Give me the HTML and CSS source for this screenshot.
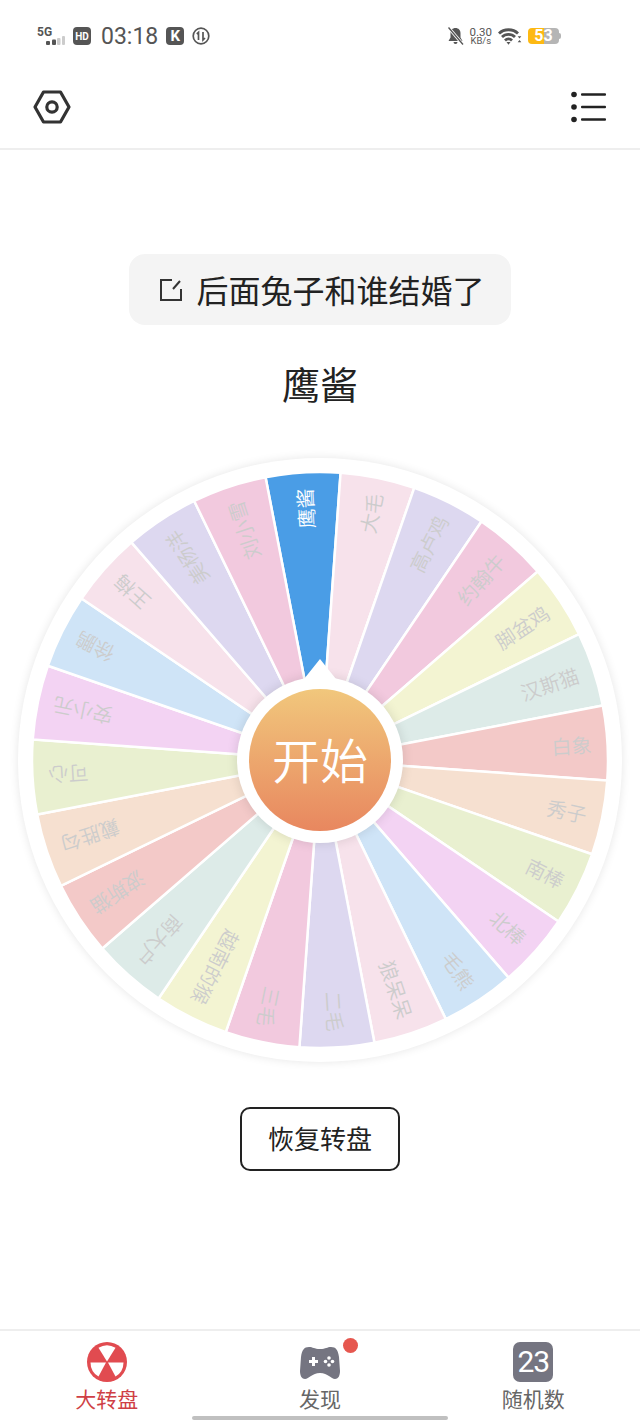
FILE: index.html
```html
<!DOCTYPE html>
<html>
  <head>
    <meta charset="utf-8">
    <meta name="viewport" content="width=device-width, initial-scale=1.0">
    <link rel="stylesheet" href="styles.css">
    <title>大转盘</title>
  </head>
  <body>
    <!--Status bar-->
    <div class="status-bar">
      <div class="status-left">
        <div class="signal">
          <span class="signal-text">5G</span>
          <svg width="21" height="10" viewBox="0 0 21 10">
            <rect x="2" y="6" width="4" height="4" rx="1" fill="#555"/>
            <rect x="8" y="4.5" width="4" height="5.5" rx="1" fill="#555"/>
            <rect x="13" y="3" width="3.5" height="7" rx="1" fill="#ccc"/>
            <rect x="18" y="1" width="3" height="9" rx="1" fill="#ccc"/>
          </svg>
        </div>
        <span class="badge badge-hd">HD</span>
        <span class="clock">03:18</span>
        <span class="badge badge-k">K</span>
        <svg width="18" height="18" viewBox="0 0 18 18" fill="none" stroke="#555">
          <circle cx="9" cy="9" r="7.8" stroke-width="1.7"/>
          <path d="M6.5 13V5.5L4.8 7M11 5v8l2-2" stroke-width="1.7"/>
        </svg>
      </div>
      <div class="status-right">
        <svg width="17" height="18" viewBox="0 0 17 18">
          <path d="M8.500 1c-3 0-5 2.200-5 5.200v4.300L1.500 14h14l-2-3.500V6.200c0-3-2-5.200-5-5.200zM6.500 15a2 2 0 0 0 4 0z" fill="#555"/>
          <path d="M1.500 .5L15.500 17" stroke="#fff" stroke-width="3"/>
          <path d="M1.500 .5L16 17.500" stroke="#555" stroke-width="1.300"/>
        </svg>
        <div class="speed"><span>0.30</span><span class="speed-unit">KB/s</span></div>
        <svg width="24" height="18" viewBox="0 0 24 18" fill="none" stroke="#555" stroke-width="2.800">
          <path d="M1 6.500C6 1.500 15 1.500 20 6.500M4 10C7.500 6.500 13.500 6.500 17 10M7 13.500c2-2 5-2 7 0"/>
          <path d="M8.500 15l2 2.800 2-2.800z" fill="#555" stroke="none"/>
          <path d="M21 11.500l1.800-2.200h-3.600zM21 13l1.800 2.200h-3.600z" fill="#555" stroke="none" transform="translate(.5 0)"/>
        </svg>
        <div class="battery"><span>5</span><span>3</span></div>
      </div>
    </div>

    <!--Toolbar-->
    <div class="toolbar">
      <svg width="38" height="34" viewBox="0 0 38 34" fill="none" stroke="#333" stroke-width="3.200">
        <path d="M10.500 2h17l8.500 15-8.500 15h-17L2 17z" stroke-linejoin="round"/>
        <circle cx="19" cy="17" r="5.200"/>
      </svg>
      <svg width="35" height="32" viewBox="0 0 35 32" fill="#222">
        <circle cx="3" cy="3.500" r="2.800"/>
        <circle cx="3" cy="16" r="2.800"/>
        <circle cx="3" cy="28.500" r="2.800"/>
        <rect x="10" y="2.300" width="25" height="2.500" rx="1"/>
        <rect x="10" y="14.800" width="25" height="2.500" rx="1"/>
        <rect x="10" y="27.300" width="25" height="2.500" rx="1"/>
      </svg>
    </div>

    <div class="content">
      <div class="question">
        <svg width="24" height="24" viewBox="0 0 24 24" fill="none" stroke="#333" stroke-width="2">
          <path d="M13 2H2v20h20V11M14 11l7-8"/>
        </svg>
        <span class="question-text">后面兔子和谁结婚了</span>
      </div>
      <div class="winner">鹰酱</div>

      <!--Wheel-->
      <div class="wheel">
        <svg class="wheel-svg" width="604" height="604" viewBox="-302 -302 604 604">
          <defs>
            <path id="wedge" d="M0 0L-37.590 -285.530A288 288 0 0 1 37.590 -285.530Z"/>
          </defs>
          <g class="slices">
            <g transform="rotate(-3.400)"><use href="#wedge" class="c-blue"/><text class="label label-on" transform="rotate(-90)" x="272">鹰酱</text></g>
            <g transform="rotate(11.600)"><use href="#wedge" class="c-lpink"/><text class="label" transform="rotate(-90)" x="272">大毛</text></g>
            <g transform="rotate(26.600)"><use href="#wedge" class="c-lav"/><text class="label" transform="rotate(-90)" x="272">高卢鸡</text></g>
            <g transform="rotate(41.600)"><use href="#wedge" class="c-pink"/><text class="label" transform="rotate(-90)" x="272">约翰牛</text></g>
            <g transform="rotate(56.600)"><use href="#wedge" class="c-yellow"/><text class="label" transform="rotate(-90)" x="272">脚盆鸡</text></g>
            <g transform="rotate(71.600)"><use href="#wedge" class="c-teal"/><text class="label" transform="rotate(-90)" x="272">汉斯猫</text></g>
            <g transform="rotate(86.600)"><use href="#wedge" class="c-red"/><text class="label" transform="rotate(-90)" x="272">白象</text></g>
            <g transform="rotate(101.600)"><use href="#wedge" class="c-peach"/><text class="label" transform="rotate(-90)" x="272">秀子</text></g>
            <g transform="rotate(116.600)"><use href="#wedge" class="c-green"/><text class="label" transform="rotate(-90)" x="272">南棒</text></g>
            <g transform="rotate(131.600)"><use href="#wedge" class="c-purple"/><text class="label" transform="rotate(-90)" x="272">北棒</text></g>
            <g transform="rotate(146.600)"><use href="#wedge" class="c-lblue"/><text class="label" transform="rotate(-90)" x="272">毛熊</text></g>
            <g transform="rotate(161.600)"><use href="#wedge" class="c-lpink"/><text class="label" transform="rotate(-90)" x="272">狼呆呆</text></g>
            <g transform="rotate(176.600)"><use href="#wedge" class="c-lav"/><text class="label" transform="rotate(-90)" x="272">二毛</text></g>
            <g transform="rotate(191.600)"><use href="#wedge" class="c-pink"/><text class="label" transform="rotate(-90)" x="272">三毛</text></g>
            <g transform="rotate(206.600)"><use href="#wedge" class="c-yellow"/><text class="label" transform="rotate(-90)" x="272">越南的猴</text></g>
            <g transform="rotate(221.600)"><use href="#wedge" class="c-teal"/><text class="label" transform="rotate(-90)" x="272">商大户</text></g>
            <g transform="rotate(236.600)"><use href="#wedge" class="c-red"/><text class="label" transform="rotate(-90)" x="272">波斯猫</text></g>
            <g transform="rotate(251.600)"><use href="#wedge" class="c-peach"/><text class="label" transform="rotate(-90)" x="272">戴胜勾</text></g>
            <g transform="rotate(266.600)"><use href="#wedge" class="c-green"/><text class="label" transform="rotate(-90)" x="272">可心</text></g>
            <g transform="rotate(281.600)"><use href="#wedge" class="c-purple"/><text class="label" transform="rotate(-90)" x="272">安小元</text></g>
            <g transform="rotate(296.600)"><use href="#wedge" class="c-lblue"/><text class="label" transform="rotate(-90)" x="272">徐鹏</text></g>
            <g transform="rotate(311.600)"><use href="#wedge" class="c-lpink"/><text class="label" transform="rotate(-90)" x="272">王梅</text></g>
            <g transform="rotate(326.600)"><use href="#wedge" class="c-lav"/><text class="label" transform="rotate(-90)" x="272">美杨洋</text></g>
            <g transform="rotate(341.600)"><use href="#wedge" class="c-pink"/><text class="label" transform="rotate(-90)" x="272">刘小雪</text></g>
          </g>
        </svg>
        <!--Start button over the wheel-->
        <div class="hub">
          <svg class="hub-pointer" width="56" height="36" viewBox="0 0 56 36">
            <path d="M28 0L52 30Q28 18 4 30Z" fill="#fff"/>
          </svg>
          <div class="hub-button">开始</div>
        </div>
      </div>

      <button class="reset">恢复转盘</button>
    </div>

    <!--Tab bar-->
    <div class="tabbar">
      <div class="tab tab-active">
        <svg width="40" height="40" viewBox="0 0 40 40">
          <circle cx="20" cy="20" r="20" fill="#e14b50"/>
          <path d="M20 19.500L11.500 5.700A16.500 16.500 0 0 1 28.500 5.700Z" fill="#fff"/>
          <path d="M21 20.500H36.500A16.500 16.500 0 0 1 28.500 34.600Z" fill="#fff"/>
          <path d="M19 20.500H3.500A16.500 16.500 0 0 0 11.500 34.600Z" fill="#fff"/>
        </svg>
        <span>大转盘</span>
      </div>
      <div class="tab">
        <div class="game-icon">
          <svg width="40" height="34" viewBox="0 0 40 34">
            <path d="M9 1c4 0 5 2 11 2s7-2 11-2c5 0 7 3 8 10l1 14c0 5-2 8-5 8-4 0-7-6-15-6S9 33 5 33c-3 0-5-3-5-8l1-14C2 4 4 1 9 1z" fill="#757581"/>
            <path d="M9 14h3v-3h3v3h3v3h-3v3h-3v-3H9z" fill="#fff"/>
            <circle cx="29" cy="12" r="1.800" fill="#fff"/>
            <circle cx="29" cy="19" r="1.800" fill="#fff"/>
            <circle cx="25.500" cy="15.500" r="1.800" fill="#fff"/>
            <circle cx="32.500" cy="15.500" r="1.800" fill="#fff"/>
          </svg>
          <i class="dot"></i>
        </div>
        <span>发现</span>
      </div>
      <div class="tab">
        <div class="num-icon">23</div>
        <span>随机数</span>
      </div>
      <div class="home-bar"></div>
    </div>
  </body>
</html>
```

FILE: styles.css
```css
* {
  box-sizing: border-box;
}

body {
  margin: 0;
  width: 640px;
  height: 1422px;
  display: flex;
  flex-direction: column;
  background-color: #fff;
  color: #222;
  font-family: "Noto Sans CJK SC", "Noto Sans", sans-serif;
  overflow: hidden;
}

/* status bar */
.status-bar {
  height: 72px;
  padding: 0 81px 0 37px;
  display: flex;
  justify-content: space-between;
  align-items: center;
  color: #555;
}

.status-left,
.status-right {
  display: flex;
  align-items: center;
}

.status-left {
  gap: 8px;
}

.status-right {
  gap: 6px;
}

.signal {
  width: 28px;
  height: 20px;
  display: flex;
  flex-direction: column;
  align-items: flex-start;
}

.signal-text {
  font-family: "Roboto", sans-serif;
  font-size: 12px;
  line-height: 12px;
  font-weight: 700;
}

.signal svg {
  margin-top: -3px;
  margin-left: 7px;
}

.badge {
  width: 18px;
  height: 18px;
  border-radius: 4px;
  background-color: #555;
  color: #fff;
  display: flex;
  align-items: center;
  justify-content: center;
  font-family: "Roboto", sans-serif;
  font-weight: 700;
}

.badge-hd {
  font-size: 10px;
}

.badge-k {
  font-size: 15px;
}

.clock {
  margin-left: 2px;
  font-family: "Roboto", sans-serif;
  font-size: 23px;
  font-weight: 400;
}

.speed {
  display: flex;
  flex-direction: column;
  align-items: center;
  font-family: "Roboto", sans-serif;
  font-size: 11.500px;
  line-height: 10px;
}

.speed span {
  display: block;
  height: 9px;
  overflow: visible;
}

.speed-unit {
  font-size: 9.500px;
  line-height: 9px;
}

.battery {
  position: relative;
  width: 31px;
  height: 16px;
  border-radius: 4px;
  background: linear-gradient(to right, #fdb913 0, #fdb913 16px, #b5b5b5 16px);
  display: flex;
  justify-content: center;
  font-family: "Roboto", sans-serif;
  font-size: 16px;
  line-height: 16px;
  font-weight: 700;
  color: #fff;
}

.battery::after {
  content: "";
  position: absolute;
  right: -2px;
  top: 5px;
  width: 2px;
  height: 6px;
  border-radius: 0 2px 2px 0;
  background-color: #b5b5b5;
}

/* toolbar */
.toolbar {
  height: 78px;
  padding: 0 34px 6px 33px;
  display: flex;
  justify-content: space-between;
  align-items: center;
  border-bottom: 2px solid #eee;
}

/* main area */
.content {
  flex: 1;
  display: flex;
  flex-direction: column;
  align-items: center;
  padding-top: 104px;
}

.question {
  width: 382px;
  height: 71px;
  padding-left: 4px;
  background-color: #f4f4f4;
  border-radius: 16px;
  display: flex;
  align-items: center;
  justify-content: center;
  gap: 13px;
  font-size: 32px;
  color: #222;
}

.question-text {
  margin-top: -2px;
}

.winner {
  margin-top: 31px;
  height: 54px;
  line-height: 54px;
  font-size: 38px;
}

.wheel {
  position: relative;
  margin-top: 48px;
  width: 604px;
  height: 604px;
  border-radius: 50%;
  background-color: #fff;
  box-shadow: 0 0 10px rgba(0, 0, 0, 0.1);
}

.wheel-svg {
  display: block;
}

.slices use {
  stroke: #fff;
  stroke-width: 2.500px;
}

.label {
  font-size: 20px;
  font-weight: 350;
  fill: #cccccc;
  text-anchor: end;
  dominant-baseline: central;
}

.label-on {
  fill: #fff;
}

.c-blue { fill: #4a9de6; }
.c-lpink { fill: #f7e2eb; }
.c-lav { fill: #ddd8f0; }
.c-pink { fill: #f2c9de; }
.c-yellow { fill: #f3f4d2; }
.c-teal { fill: #ddebe8; }
.c-red { fill: #f3c9c8; }
.c-peach { fill: #f6e0d0; }
.c-green { fill: #e9f0d0; }
.c-purple { fill: #f3d3f3; }
.c-lblue { fill: #cfe4f7; }

.hub {
  position: absolute;
  left: 219px;
  top: 219px;
  width: 166px;
  height: 166px;
  border-radius: 50%;
  background-color: #fff;
  box-shadow: 0 0 12px rgba(0, 0, 0, 0.12);
  display: flex;
  align-items: center;
  justify-content: center;
}

.hub-pointer {
  position: absolute;
  left: 55px;
  top: -18px;
}

.hub-button {
  position: relative;
  width: 142px;
  height: 142px;
  border-radius: 50%;
  background: linear-gradient(to bottom, #f1c77c, #e8875f);
  color: #fff;
  font-size: 48px;
  font-weight: 350;
  line-height: 138px;
  text-align: center;
}

.reset {
  margin-top: 45px;
  width: 160px;
  height: 64px;
  padding: 0 0 3px;
  background-color: #fff;
  border: 2px solid #222;
  border-radius: 10px;
  color: #222;
  font-family: inherit;
  font-size: 26px;
}

/* bottom tabs */
.tabbar {
  position: relative;
  height: 93px;
  border-top: 2px solid #eee;
  display: grid;
  grid-template-columns: repeat(3, 1fr);
  padding: 11px 0 0;
}

.tab {
  display: flex;
  flex-direction: column;
  align-items: center;
  font-size: 21px;
  line-height: 30px;
  color: #666;
}

.tab-active {
  color: #cf3f46;
}

.tab svg {
  display: block;
}

.tab span {
  margin-top: 1px;
}

.game-icon {
  position: relative;
  height: 40px;
  padding-top: 4px;
}

.dot {
  position: absolute;
  right: -18px;
  top: -4px;
  width: 15px;
  height: 15px;
  border-radius: 50%;
  background-color: #e6574f;
}

.num-icon {
  width: 40px;
  height: 40px;
  border-radius: 7px;
  background-color: #757581;
  color: #fff;
  font-family: "Roboto", sans-serif;
  font-size: 30px;
  letter-spacing: -1px;
  line-height: 40px;
  text-align: center;
}

.home-bar {
  position: absolute;
  left: 192px;
  bottom: 2px;
  width: 256px;
  height: 4px;
  border-radius: 2px;
  background-color: #c0c0c0;
}
```
